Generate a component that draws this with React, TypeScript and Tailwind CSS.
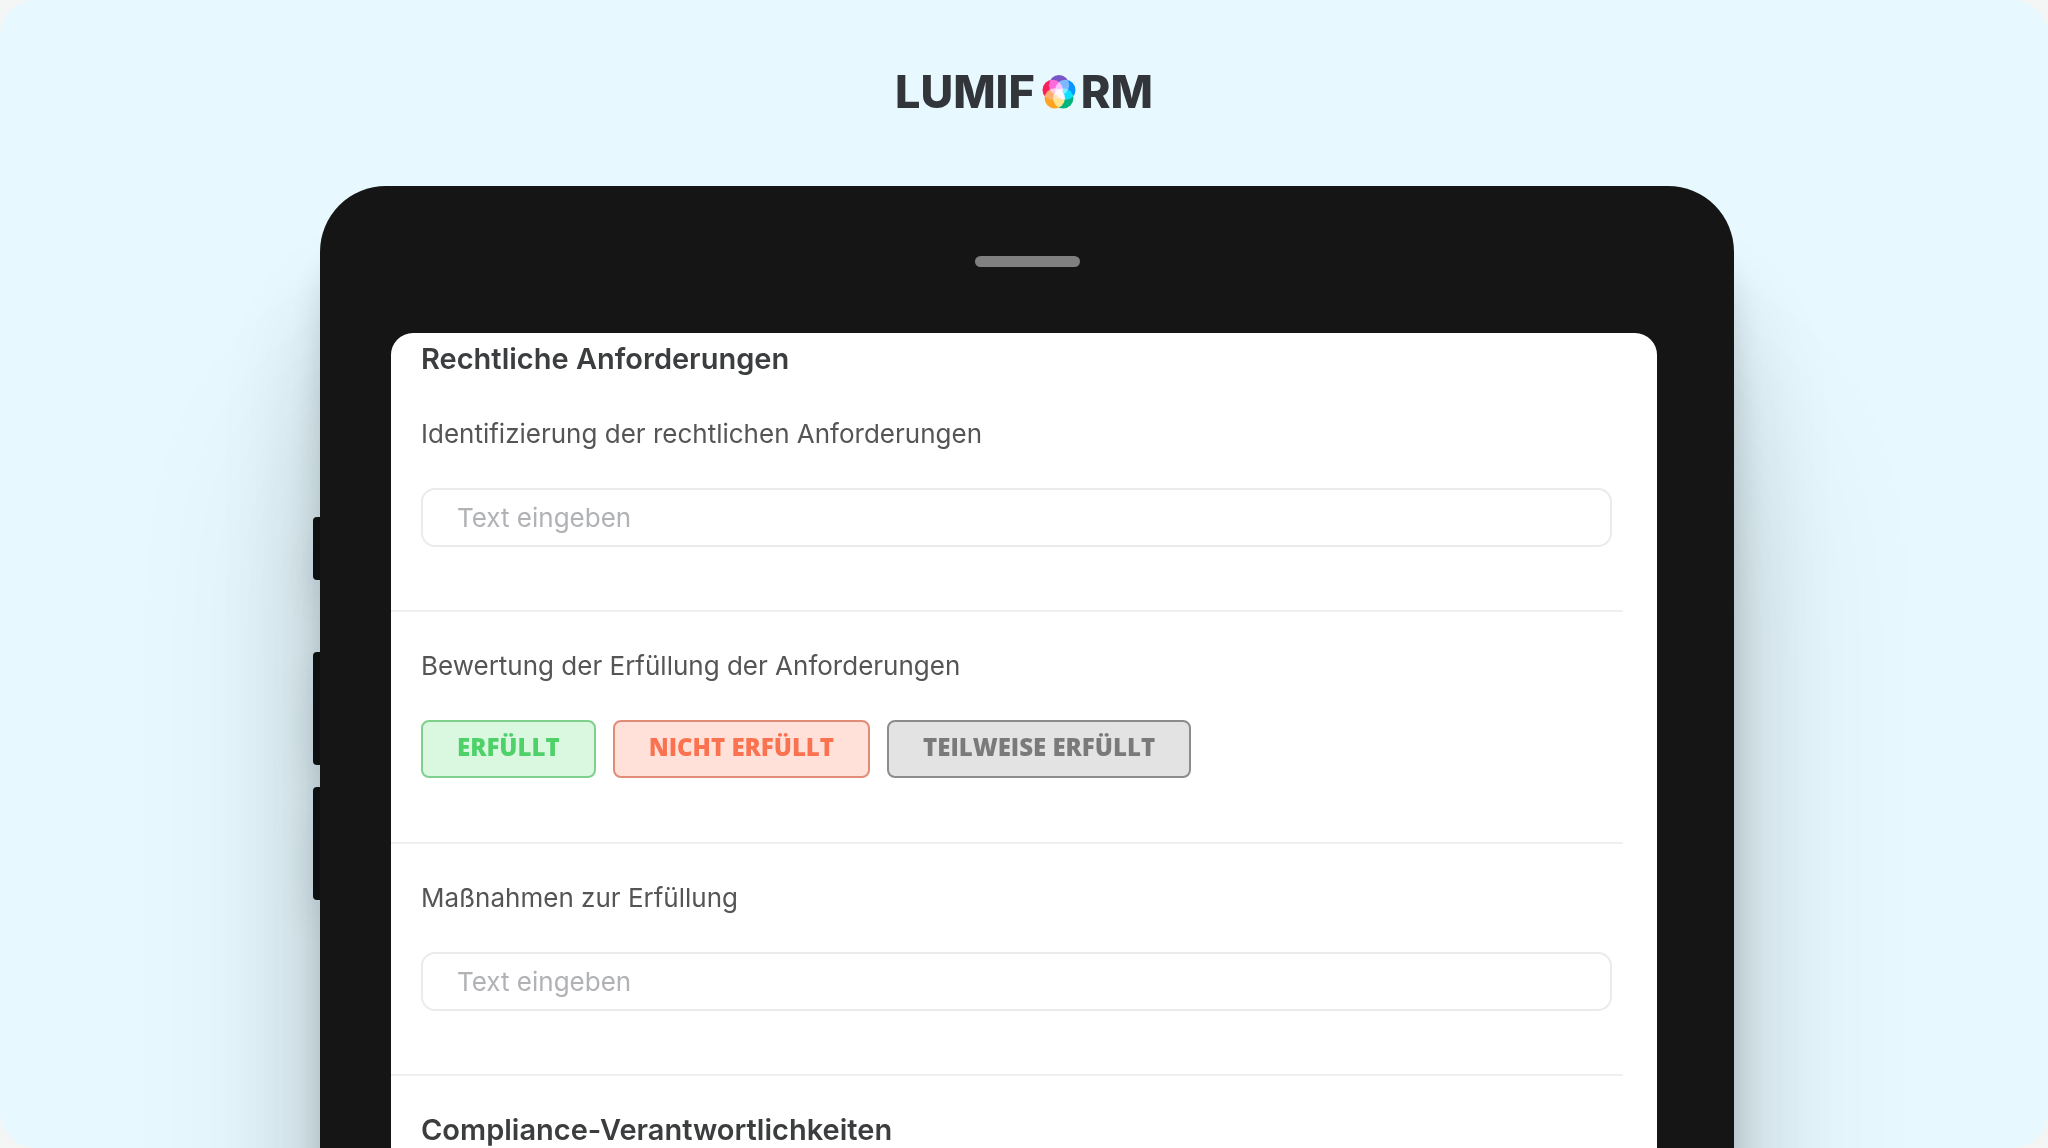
import { useState } from "react";
import clsx from "clsx";

const answers = [
  { label: "ERFÜLLT", style: "border-[#7fd08c] bg-[#daf7df] text-[#4fd169]" },
  { label: "NICHT ERFÜLLT", style: "border-[#e08c78] bg-[#ffe1d9] text-[#fb7250]" },
  { label: "TEILWEISE ERFÜLLT", style: "border-[#8c8c8c] bg-[#e3e3e3] text-[#7a7a7a]" },
];

function Logo() {
  return (
    <div className="flex items-center text-[45px] font-extrabold leading-[52px] text-[#32363a]">
      <span>LUMIF</span>
      <svg className="ml-[6px] mr-1 h-9 w-9" viewBox="0 0 34 34" aria-hidden="true">
        <g className="isolate">
          <circle cx="17" cy="10.6" r="9.6" fill="#7a55c7" className="mix-blend-screen" />
          <circle cx="23" cy="15" r="9.6" fill="#0a95ff" className="mix-blend-screen" />
          <circle cx="21" cy="23" r="9.6" fill="#00b57c" className="mix-blend-screen" />
          <circle cx="13" cy="23" r="9.6" fill="#ffa320" className="mix-blend-screen" />
          <circle cx="11" cy="15" r="9.6" fill="#fa1f5a" className="mix-blend-screen" />
        </g>
      </svg>
      <span>RM</span>
    </div>
  );
}

function TextQuestion({ id, label }: { id: string; label: string }) {
  return (
    <div className="h-[232px] border-b-2 border-[#efefef] pl-[30px] pr-[11px] pt-[34px]">
      <label htmlFor={id} className="block text-[26px] leading-10 text-[#555555]">
        {label}
      </label>
      <input
        id={id}
        type="text"
        placeholder="Text eingeben"
        className="mt-[34px] h-[59px] w-full rounded-[14px] border-2 border-[#ebebeb] bg-white px-[34px] text-[26px] text-[#555555] placeholder:text-[#b0b2b5]"
      />
    </div>
  );
}

export default function App() {
  const [selected, setSelected] = useState<string | null>(null);

  return (
    <div className="h-screen bg-[#f4f5f5] font-['Inter',sans-serif]">
      <main className="flex h-full flex-col overflow-hidden rounded-[36px] bg-[#e7f9ff]">
        <header className="flex h-[186px] shrink-0 items-start justify-center pt-[66px]">
          <Logo />
        </header>

        <div className="flex pl-[313px] pr-[314px]">
          {/* hardware buttons */}
          <div className="flex w-[7px] shrink-0 flex-col pt-[331px]">
            <span className="h-[63px] rounded-l-sm bg-[#111516] shadow-[0_20px_40px_rgba(0,0,0,0.15)]" />
            <span className="mt-[72px] h-[113px] rounded-l-sm bg-[#111516] shadow-[0_20px_40px_rgba(0,0,0,0.15)]" />
            <span className="mt-[22px] h-[113px] rounded-l-sm bg-[#111516] shadow-[0_20px_40px_rgba(0,0,0,0.15)]" />
          </div>

          <div className="h-[1400px] grow rounded-[66px] bg-[#151515] pl-[71px] pr-[77px] pt-[70px] shadow-[0_60px_30px_rgba(0,0,0,0.12),0_120px_100px_rgba(0,0,0,0.16),0_240px_200px_rgba(0,0,0,0.12)]">
            <div className="flex justify-center pl-[6px]">
              <div className="h-[11px] w-[105px] rounded-full bg-[#808080]" />
            </div>

            <div className="mt-[66px] h-full rounded-t-[22px] bg-white pr-[34px]">
              <h2 className="h-[47px] pl-[30px] pt-2 text-[29px] font-semibold leading-9 text-[#3b3d3e]">
                Rechtliche Anforderungen
              </h2>
              <TextQuestion id="anforderungen" label="Identifizierung der rechtlichen Anforderungen" />

              <div className="h-[232px] border-b-2 border-[#efefef] pl-[30px] pt-[34px]">
                <p className="text-[26px] leading-10 text-[#555555]">Bewertung der Erfüllung der Anforderungen</p>
                <div className="mt-[34px] flex gap-[17px]">
                  {answers.map((answer) => (
                    <button
                      key={answer.label}
                      type="button"
                      aria-pressed={selected === answer.label}
                      onClick={() => setSelected(answer.label)}
                      className={clsx(
                        "h-[58px] rounded-lg border-2 px-[34px] pb-1 font-['Open_Sans',sans-serif] text-[24px] font-extrabold",
                        answer.style
                      )}
                    >
                      {answer.label}
                    </button>
                  ))}
                </div>
              </div>

              <TextQuestion id="massnahmen" label="Maßnahmen zur Erfüllung" />

              <h2 className="pl-[30px] pt-[34px] text-[29px] font-semibold leading-10 text-[#3b3d3e]">
                Compliance-Verantwortlichkeiten
              </h2>
            </div>
          </div>
        </div>
      </main>
    </div>
  );
}
